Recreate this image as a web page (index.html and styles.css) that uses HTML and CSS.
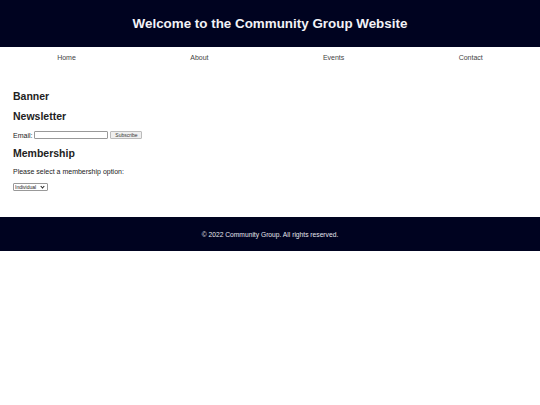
FILE: index.html
```html
<!DOCTYPE html>
<html lang="en">
<head>
    <meta charset="UTF-8">
    <meta name="viewport" content="width=device-width, initial-scale=1.0">
    <title>Community Group</title>
    <link rel="stylesheet" href="styles.css">
</head>
<body>

<header class="header">
    <h1 class="title">Welcome to the Community Group Website</h1>
</header>

<nav class="nav">
    <a class="nav-link" href="#">Home</a>
    <a class="nav-link" href="#">About</a>
    <a class="nav-link" href="#">Events</a>
    <a class="nav-link" href="#">Contact</a>
</nav>

<main class="content">
    <section class="section">
        <h2 class="section-title">Banner</h2>
    </section>

    <section class="section">
        <h2 class="section-title">Newsletter</h2>
        <form class="newsletter-form">
            <label class="form-label" for="email">Email:</label>
            <input class="email-input" type="email" id="email">
            <button class="small-button" type="submit">Subscribe</button>
        </form>
    </section>

    <section class="section">
        <h2 class="section-title">Membership</h2>
        <p class="text">Please select a membership option:</p>
        <div class="select-wrap">
            <select class="small-select">
                <option>Individual</option>
                <option>Family</option>
                <option>Business</option>
            </select>
        </div>
    </section>
</main>

<footer class="footer">
    <p class="footer-text">&copy; 2022 Community Group. All rights reserved.</p>
</footer>

</body>
</html>
```

FILE: styles.css
```css
body {
    font-family: "Liberation Sans", Arial, sans-serif;
    margin: 0;
    padding: 0;
    color: #222;
}

.header {
    background-color: #000320;
    height: 47px;
    display: flex;
    align-items: center;
    justify-content: center;
}

.title {
    margin: 0;
    font-size: 13.4px;
    font-weight: bold;
    color: #f2f2f7;
}

.nav {
    display: flex;
    justify-content: space-around;
    padding: 7px 0 5px;
}

.nav-link {
    font-size: 7px;
    color: #444;
    text-decoration: none;
}

.content {
    padding: 24px 13px 26px;
}

.section-title {
    font-size: 10.5px;
    margin: 0 0 8px;
}

.newsletter-form {
    display: flex;
    align-items: center;
    gap: 2px;
    padding-top: 1px;
    margin-bottom: 8px;
}

.form-label,
.text {
    font-size: 7px;
}

.email-input {
    width: 72px;
    height: 6px;
    padding: 0;
    border: 1px solid #999;
    border-radius: 1px;
}

.small-button {
    font-family: inherit;
    font-size: 5px;
    width: 32px;
    height: 8px;
    padding: 0;
    border: 1px solid #bbb;
    border-radius: 1px;
    background-color: #efefef;
    color: #333;
}

.text {
    margin: 9px 0 8px;
}

/* native select is too big at this size, so draw the chevron ourselves */
.select-wrap {
    position: relative;
    display: flex;
    width: max-content;
}

.small-select {
    appearance: none;
    font-family: inherit;
    font-size: 5px;
    width: 35px;
    height: 8px;
    padding: 0 0 0 1px;
    border: 1px solid #999;
    border-radius: 1px;
    background-color: #fff;
    color: #222;
}

.select-wrap::after {
    content: "";
    position: absolute;
    right: 4px;
    top: 2px;
    width: 2px;
    height: 2px;
    border-right: 1px solid #222;
    border-bottom: 1px solid #222;
    transform: rotate(45deg);
    pointer-events: none;
}

.footer {
    background-color: #000320;
    height: 34px;
    display: flex;
    align-items: center;
    justify-content: center;
}

.footer-text {
    margin: 0;
    font-size: 6.7px;
    color: #e6e6ee;
}
```
